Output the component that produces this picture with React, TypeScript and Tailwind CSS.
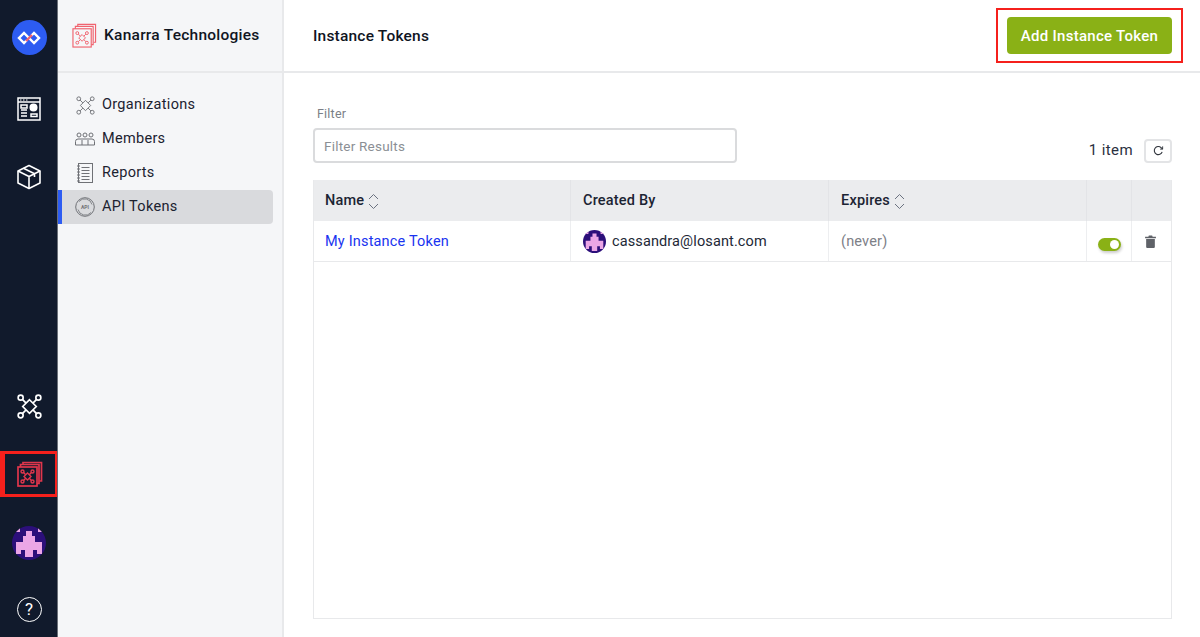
import React from "react";

function NetworkIcon({ size = 24, color = "#fff", sw = 1.5 }: { size?: number; color?: string; sw?: number }) {
  return (
    <svg width={size} height={size} viewBox="0 0 24 24" fill="none" stroke={color} strokeWidth={sw}>
      <circle cx="3.5" cy="3.5" r="2.4" />
      <circle cx="20.5" cy="3.5" r="2.4" />
      <circle cx="3.5" cy="20.5" r="2.4" />
      <circle cx="20.5" cy="20.5" r="2.4" />
      <path d="M12 5.500 18.500 12 12 18.500 5.500 12Z" />
      <path d="M5.200 5.200 8.700 8.700M18.800 5.200 15.300 8.700M5.200 18.800 8.700 15.300M18.800 18.800 15.300 15.300" />
    </svg>
  );
}

function StackIcon({ size = 30, color = "#f0636f", sw = 1.2, inner = 1 }: { size?: number; color?: string; sw?: number; inner?: number }) {
  return (
    <svg width={size} height={size} viewBox="0 0 26 26" fill="none" stroke={color} strokeWidth={sw}>
      <path d="M6 3.500V1.500H24.500V20H22.500" />
      <path d="M3.500 6V3.500H22V22.500H20" />
      <rect x="1" y="6" width="19" height="19" />
      <g strokeWidth={inner}>
        <circle cx="5.500" cy="10.500" r="1.500" />
        <circle cx="15.500" cy="10.500" r="1.500" />
        <circle cx="5.500" cy="20.500" r="1.500" />
        <circle cx="15.500" cy="20.500" r="1.500" />
        <path d="M10.500 12 14 15.500 10.500 19 7 15.500Z" />
        <path d="M6.600 11.600 8.700 13.700M14.400 11.600 12.300 13.700M6.600 19.400 8.700 17.300M14.400 19.400 12.300 17.300" />
      </g>
    </svg>
  );
}

function PixelAvatar({ size }: { size: number }) {
  return (
    <svg width={size} height={size} viewBox="0 0 34 34" className="block">
      <defs>
        <clipPath id={`av${size}`}>
          <circle cx="17" cy="17" r="17" />
        </clipPath>
      </defs>
      <circle cx="17" cy="17" r="17" fill="#2c0f7a" />
      <g fill="#eba6e6" clipPath={`url(#av${size})`}>
        <path d="M14 5H20V10H23V16H30V28H25V24H21V31H13V24H9V28H4V16H11V10H14Z" />
        <path d="M3 1H8V6H3ZM26 1H31V6H26Z" />
      </g>
    </svg>
  );
}

function SortIcon() {
  return (
    <svg width="11" height="17" viewBox="0 0 11 17" fill="none" stroke="#6b7280" strokeWidth="1" className="ml-[4px]">
      <path d="M1 6 5.500 1.500 10 6M1 11 5.500 15.500 10 11" />
    </svg>
  );
}

function Rail() {
  return (
    <div className="w-[58px] shrink-0 h-full bg-[#111a2c] border-r border-[#6b7078] flex flex-col items-center">
      <div className="mt-[20px] ml-[1px] w-[35px] h-[35px] rounded-full bg-[#2d5cf2] flex items-center justify-center">
        <svg width="24" height="14" viewBox="0 0 24 14" fill="none" strokeWidth="2.400">
          <path d="M12 7 7 2 2 7 7 12 9.500 9.500" stroke="#fff" />
          <path d="M12 7 17 12 22 7 17 2 14.500 4.500" stroke="#fff" />
          <path d="M9 10 15 4" stroke="#f0636f" />
        </svg>
      </div>
      <div className="mt-[42px] ml-[1px] h-[24px] flex items-center">
        <svg width="24" height="24" viewBox="0 0 24 24" fill="none" stroke="#fff" strokeWidth="1.500">
          <rect x="1" y="1" width="22" height="22" />
          <path d="M1 5h22" />
          <path d="M3 3h1.500M6 3h1.500M9 3h1.500" strokeWidth="1" />
          <path d="M4 8h6v3H4ZM4 13h6M4 16h6M4 19h6M14 17h6v2.500h-6Z" />
          <circle cx="16.500" cy="10.500" r="3.300" fill="#fff" />
        </svg>
      </div>
      <div className="mt-[44px] ml-[1px] h-[24px] flex items-center">
        <svg width="24" height="26" viewBox="0 0 24 26" fill="none" stroke="#fff" strokeWidth="1.600" strokeLinejoin="round">
          <path d="M12 1.500 23 7V19L12 24.500 1 19V7Z" />
          <path d="M1 7 12 12.500 23 7M12 12.500V24.500M6.500 4.200 17.500 9.800V13" />
        </svg>
      </div>
      <div className="flex-1" />
      <div className="mb-[32px] ml-[1px]">
        <NetworkIcon size={25} sw={1.600} />
      </div>
      <div className="w-full h-[46px] border-[3px] border-[#f5201c] border-l-[5px] border-r-[2px] flex items-center justify-center">
        <StackIcon size={26} color="#e0364c" sw={1.700} inner={1.400} />
      </div>
      <div className="mt-[29px] ml-[1px]">
        <PixelAvatar size={34} />
      </div>
      <div className="mt-[37px] mb-[15px] ml-[1px] w-[25px] h-[25px] rounded-full border-[1.500px] border-white flex items-center justify-center text-white text-[17px] leading-none">
        ?
      </div>
    </div>
  );
}

function NavItem({ label, icon, active }: { label: string; icon: React.ReactNode; active?: boolean }) {
  return (
    <div className={active ? "h-[34px] mr-[9px] flex items-center rounded-r-[4px] bg-[#d9dadd] border-l-[4px] border-[#2d5cf2] pl-[13px]" : "h-[34px] mr-[9px] flex items-center pl-[17px]"}>
      <span className="w-[20px] h-[20px] flex items-center justify-center">{icon}</span>
      <span className="ml-[7px] text-[14.500px] text-[#1c2230] tracking-[0.3px]">{label}</span>
    </div>
  );
}

function Sidebar() {
  const g = "#6f7176";
  return (
    <div className="w-[226px] shrink-0 h-full bg-[#f5f6f8] border-r-2 border-[#e8e9eb]">
      <div className="h-[73px] border-b-2 border-[#e8e9eb] flex items-center pl-[14px]">
        <StackIcon size={25} />
        <span className="ml-[7px] pt-[1px] text-[15.500px] font-medium text-[#10151f] tracking-[0.25px] whitespace-nowrap">Kanarra Technologies</span>
      </div>
      <div className="pt-[15px]">
        <NavItem label="Organizations" icon={<NetworkIcon size={19} color={g} sw={1.200} />} />
        <NavItem
          label="Members"
          icon={
            <svg width="20" height="14" viewBox="0 0 20 14" fill="none" stroke={g} strokeWidth="1">
              <circle cx="4" cy="3" r="2" />
              <circle cx="10" cy="3" r="2" />
              <circle cx="16" cy="3" r="2" />
              <path d="M.500 13V9.500Q.500 7 3 7H17Q19.500 7 19.500 9.500V13ZM7 8v5M13 8v5" />
            </svg>
          }
        />
        <NavItem
          label="Reports"
          icon={
            <svg width="16" height="20" viewBox="0 0 16 20" fill="none" stroke={g} strokeWidth="1">
              <rect x="1.500" y=".500" width="14" height="19" />
              <path d="M4.500 4.500h8M4.500 7.500h8M4.500 10.500h8M4.500 13.500h8M4.500 16.500h8" />
              <path d="M0 3h3M0 6h3M0 9h3M0 12h3M0 15h3M0 18h3" />
            </svg>
          }
        />
        <NavItem
          label="API Tokens"
          active
          icon={
            <svg width="20" height="20" viewBox="0 0 20 20" fill="none" stroke={g}>
              <circle cx="10" cy="10" r="9.300" strokeWidth="1" />
              <path d="M4 4.500A7.500 7.500 0 0 1 17 7.500M16 15.500A7.500 7.500 0 0 1 3 12.500" strokeWidth=".8" />
              <text x="10" y="11.800" textAnchor="middle" fontSize="5" fontWeight="700" fill={g} stroke="none">API</text>
            </svg>
          }
        />
      </div>
    </div>
  );
}

function Main() {
  const th = "h-[41px] pt-[1px] border-r border-[#e3e4e7] flex items-center text-[14.500px] font-medium text-[#1c2433] tracking-[0.2px]";
  const td = "h-[40px] pt-[1px] border-r border-[#edeef0] flex items-center text-[14.500px] tracking-[0.18px]";
  return (
    <div className="flex-1 h-full flex flex-col min-w-0 bg-white">
      <div className="h-[73px] shrink-0 border-b-2 border-[#e8e9eb] flex items-center justify-between pl-[29px] pr-[17px]">
        <span className="text-[15.500px] pt-[2px] font-medium text-[#10151f] tracking-[0.2px]">Instance Tokens</span>
        <div className="border-2 border-[#f5201c] px-[9px] py-[7px]">
          <button className="w-[165px] h-[37px] pt-[1px] rounded-[4px] bg-[#8ab116] text-white text-[15px] font-medium tracking-[0.28px] flex items-center justify-center">
            Add Instance Token
          </button>
        </div>
      </div>
      <div className="flex-1 min-h-0 pl-[29px] pr-[28px] pt-[33px] pb-[18px] flex flex-col">
        <div className="flex items-end justify-between">
          <div>
            <div className="text-[12.500px] leading-[16px] text-[#7b7f86] pl-[4px] mb-[6px] tracking-[0.2px]">Filter</div>
            <input
              placeholder="Filter Results"
              className="block w-[424px] h-[35px] rounded-[4px] border-2 border-[#dadbdd] px-[9px] text-[13.500px] tracking-[0.22px] bg-white placeholder:text-[#8b8f95] outline-none"
            />
          </div>
          <div className="flex items-center">
            <span className="text-[15px] text-[#2a3040] tracking-[0.4px] pb-[2px]">1 item</span>
            <div className="ml-[11px] w-[28px] h-[24px] rounded-[4px] border-2 border-[#e3e4e6] flex items-center justify-center">
              <svg width="11" height="11" viewBox="0 0 12 12" fill="none" stroke="#30343c" strokeWidth="1.200">
                <path d="M10 7.500A4.400 4.400 0 1 1 8.800 2.800L10.500 4.500" />
                <path d="M10.500 1.500V4.500H7.800" strokeWidth="1" />
              </svg>
            </div>
          </div>
        </div>
        <div className="mt-[17px] flex-1 border border-[#e8e9eb] border-t-0">
          <div className="flex bg-[#ebecee]">
            <div className={`${th} w-[257px] pl-[11px]`}>Name<SortIcon /></div>
            <div className={`${th} w-[258px] pl-[12px]`}>Created By</div>
            <div className={`${th} w-[258px] pl-[12px]`}>Expires<SortIcon /></div>
            <div className={`${th} w-[45px]`} />
            <div className="flex-1" />
          </div>
          <div className="flex border-b border-[#e8e9eb]">
            <div className={`${td} w-[257px] pl-[11px] text-[#1a34f0]`}>My Instance Token</div>
            <div className={`${td} w-[258px] pl-[12px] text-[#222836]`}>
              <PixelAvatar size={23} />
              <span className="ml-[6px] tracking-[0.12px]">cassandra@losant.com</span>
            </div>
            <div className={`${td} w-[258px] pl-[12px] text-[#7d8087]`}>(never)</div>
            <div className={`${td} w-[45px] justify-center`}>
              <div className="mt-[6px] w-[23px] h-[13px] rounded-full bg-[#8ab116] flex items-center justify-end pr-[2px] shadow-[1px_2px_3px_rgba(0,0,0,0.2)]">
                <div className="w-[9px] h-[9px] rounded-full bg-white" />
              </div>
            </div>
            <div className="flex-1 flex items-center justify-center pr-[2px]">
              <svg width="11" height="13" viewBox="0 0 10 12" fill="#5f6268">
                <path d="M0 1.500H3L3.500 .500H6.500L7 1.500H10V3H0ZM1 3.800H9V11A1 1 0 0 1 8 12H2A1 1 0 0 1 1 11Z" />
              </svg>
            </div>
          </div>
        </div>
      </div>
    </div>
  );
}

export default function App() {
  return (
    <div className="w-[1200px] h-[637px] flex overflow-hidden bg-white font-['Roboto','Noto_Sans',sans-serif]">
      <Rail />
      <Sidebar />
      <Main />
    </div>
  );
}
